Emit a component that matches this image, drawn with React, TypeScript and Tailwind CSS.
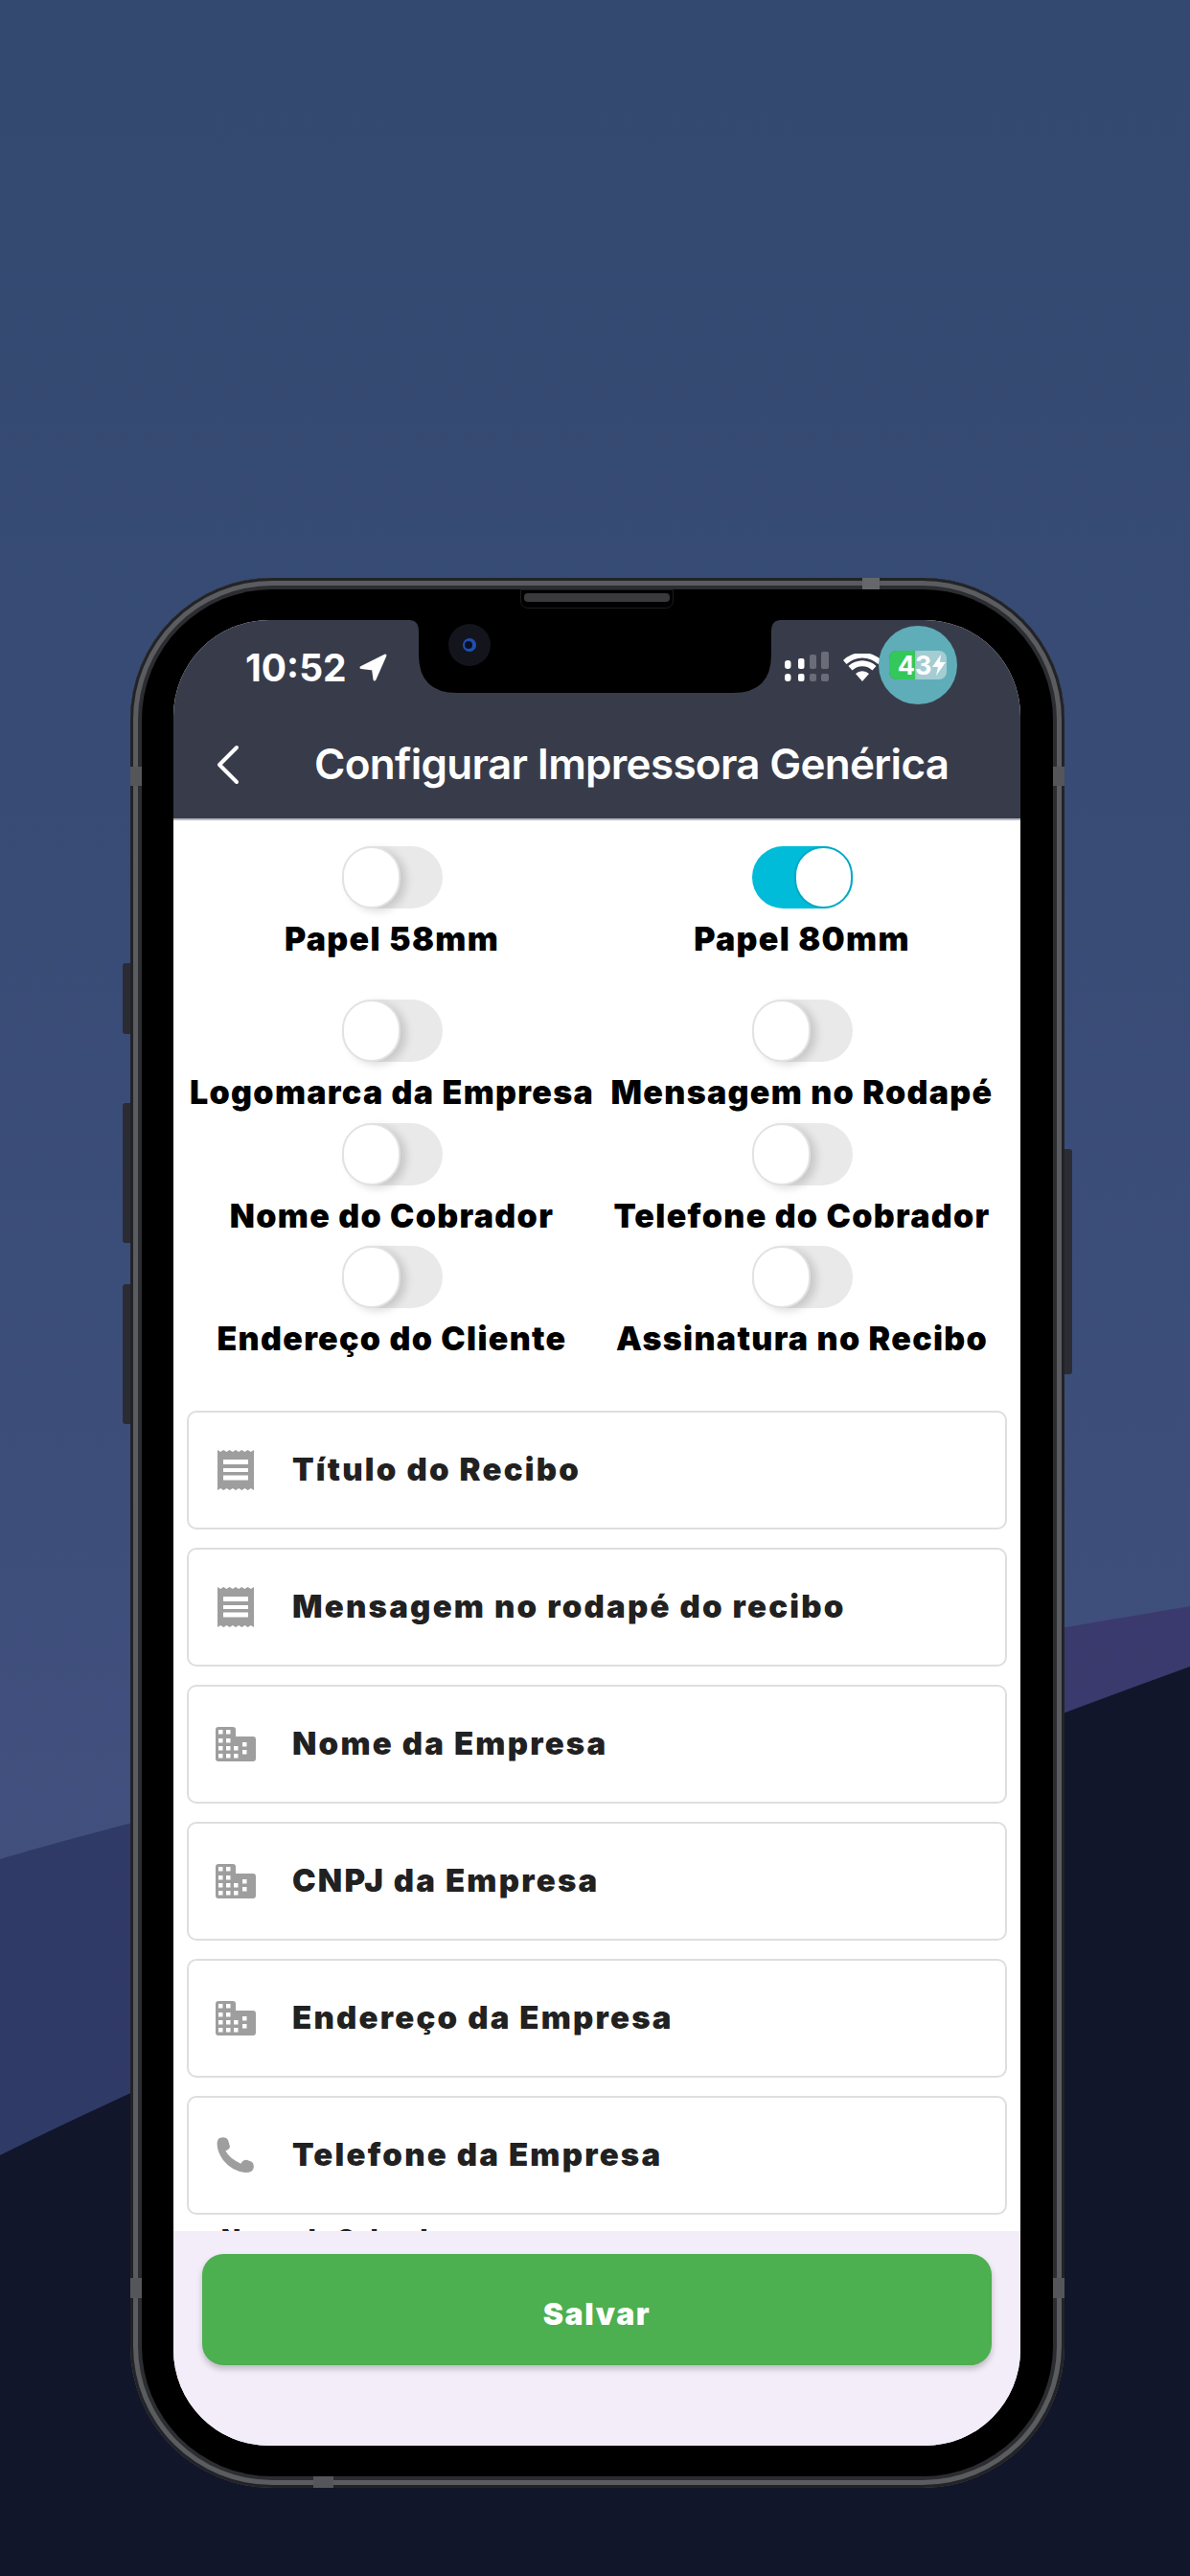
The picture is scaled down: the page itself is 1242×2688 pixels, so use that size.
const toggles = [
  [
    { label: "Papel 58mm", on: false },
    { label: "Papel 80mm", on: true },
  ],
  [
    { label: "Logomarca da Empresa", on: false },
    { label: "Mensagem no Rodapé", on: false },
  ],
  [
    { label: "Nome do Cobrador", on: false },
    { label: "Telefone do Cobrador", on: false },
  ],
  [
    { label: "Endereço do Cliente", on: false },
    { label: "Assinatura no Recibo", on: false },
  ],
];

const fields = [
  { label: "Título do Recibo", icon: "receipt" },
  { label: "Mensagem no rodapé do recibo", icon: "receipt" },
  { label: "Nome da Empresa", icon: "building" },
  { label: "CNPJ da Empresa", icon: "building" },
  { label: "Endereço da Empresa", icon: "building" },
  { label: "Telefone da Empresa", icon: "phone" },
];

// janelas do ícone de prédio [x, y]
const windows = [
  [3, 3], [11, 3],
  [3, 12], [11, 12],
  [3, 20], [11, 20], [19, 20],
  [3, 28], [11, 28], [19, 28],
  [28, 16], [28, 24],
];

function ReceiptIcon() {
  return (
    <svg width="38" height="42" viewBox="0 0 38 42">
      <path
        fill="#9e9e9e"
        d="M0 0l3.200 2 3.100-2 3.200 2 3.100-2 3.200 2 3.200-2 3.100 2 3.200-2 3.100 2 3.200-2 3.200 2L38 0v42l-3.200-2-3.100 2-3.200-2-3.100 2-3.200-2-3.200 2-3.100-2-3.200 2-3.100-2-3.200 2-3.200-2L0 42z"
      />
      <rect x="6" y="10" width="26" height="5" fill="#fff" />
      <rect x="6" y="19" width="26" height="4" fill="#fff" />
      <rect x="6" y="26.500" width="26" height="5" fill="#fff" />
    </svg>
  );
}

function BuildingIcon() {
  return (
    <svg width="42" height="36" viewBox="0 0 42 36">
      <path
        fill="#9e9e9e"
        d="M3 0h15a3 3 0 0 1 3 3v7h18a3 3 0 0 1 3 3v20a3 3 0 0 1-3 3H3a3 3 0 0 1-3-3V3a3 3 0 0 1 3-3z"
      />
      {windows.map(([x, y]) => (
        <rect key={`${x}-${y}`} x={x} y={y} width="4.500" height="4.500" fill="#fff" />
      ))}
    </svg>
  );
}

function PhoneIcon() {
  return (
    <svg width="60" height="60" viewBox="0 0 180 180">
      <path
        fill="#9e9e9e"
        d="M40 36Q60 30 66 42L72 62Q72 70 58 76Q70 100 106 116Q112 104 124 104L140 110Q148 114 146 130Q144 144 122 144Q78 140 50 104Q30 76 32 50Q34 38 40 36z"
      />
    </svg>
  );
}

function Toggle({ on }: { on: boolean }) {
  return (
    <div
      className={`flex h-[65px] w-[105px] rounded-full ${
        on ? "justify-end bg-[#00bcd9]" : "justify-start bg-[#e9e9e9]"
      }`}
    >
      <div
        className={`h-[65px] w-[61px] rounded-full border-2 bg-white ${
          on ? "border-[#00a9c4]" : "border-[#e2e2e2] shadow-[6px_3px_8px_rgba(0,0,0,0.14)]"
        }`}
      />
    </div>
  );
}

export default function App() {
  return (
    <div className="relative h-[2688px] w-[1242px] overflow-hidden bg-gradient-to-b from-[#33496f] via-[#3b4d79] to-[#4a5384] pl-[136px] pt-[603px] font-['Inter',sans-serif]">
      {/* ondas do fundo */}
      <svg className="absolute left-0 top-0" width="1242" height="2688" viewBox="0 0 1242 2688">
        <defs>
          <linearGradient id="band" x1="0" y1="0" x2="1" y2="0">
            <stop offset="0" stopColor="#2f3a66" />
            <stop offset="1" stopColor="#3b3a6e" />
          </linearGradient>
        </defs>
        <path fill="url(#band)" d="M0 1940C120 1905 500 1800 1242 1676V2688H0z" />
        <path fill="#12162b" d="M0 2249C300 2100 800 1900 1242 1739V2688H0z" />
      </svg>

      {/* botões laterais */}
      <div className="absolute left-[128px] top-[1005px] h-[74px] w-[8px] rounded-l-[3px] bg-[#2b2c33]" />
      <div className="absolute left-[128px] top-[1151px] h-[146px] w-[8px] rounded-l-[3px] bg-[#2b2c33]" />
      <div className="absolute left-[128px] top-[1340px] h-[146px] w-[8px] rounded-l-[3px] bg-[#2b2c33]" />
      <div className="absolute left-[1111px] top-[1199px] h-[235px] w-[8px] rounded-r-[3px] bg-[#2b2c33]" />

      <div className="relative h-[1993px] w-[975px] rounded-[148px] bg-black pl-[45px] pt-[44px] shadow-[inset_0_0_0_3px_#222327,inset_0_0_0_8px_#5b5c60,inset_0_0_0_12px_#2c2d30]">
        {/* antenas e alto-falante */}
        <div className="absolute left-[764px] top-0 h-[12px] w-[18px] bg-[#66676b]" />
        <div className="absolute left-[191px] bottom-0 h-[12px] w-[21px] bg-[#55565a]" />
        <div className="absolute left-0 top-[197px] h-[20px] w-[12px] bg-[#55565a]" />
        <div className="absolute right-0 top-[197px] h-[20px] w-[12px] bg-[#55565a]" />
        <div className="absolute left-0 top-[1774px] h-[21px] w-[12px] bg-[#55565a]" />
        <div className="absolute right-0 top-[1774px] h-[21px] w-[12px] bg-[#55565a]" />
        <div className="absolute left-[407px] top-[12px] h-[20px] w-[160px] rounded-b-[8px] border border-[#1c1c1f] bg-black p-[3px]">
          <div className="h-[9px] rounded-[4px] bg-[#3a3a3d]" />
        </div>

        <div className="relative flex h-[1905px] w-[884px] flex-col overflow-hidden rounded-[100px] bg-white">
          {/* cabeçalho */}
          <div className="flex h-[209px] flex-col border-b-2 border-[#b9bbc2] bg-[#383c4a] text-white">
            <div className="flex h-[96px] items-center pl-[75px] pt-[2px]">
              <span className="text-[39px] font-bold leading-none">10:52</span>
              <svg className="ml-[12px]" width="31" height="31" viewBox="0 0 31 31">
                <path
                  fill="#fff"
                  stroke="#fff"
                  strokeWidth="3"
                  strokeLinejoin="round"
                  d="M28 3L3 15.500L15.500 17L17 28z"
                />
              </svg>
              <svg className="ml-[414px]" width="46" height="32" viewBox="0 0 46 32">
                <g fill="#fff">
                  <rect x="0" y="9" width="6.500" height="9" rx="3" />
                  <rect x="0" y="23" width="6.500" height="8" rx="3" />
                  <rect x="14" y="7" width="6.500" height="11" rx="2" />
                  <rect x="14" y="23" width="6.500" height="8" rx="2" />
                </g>
                <g fill="#6a6d78">
                  <rect x="26" y="3" width="7" height="15" rx="2" />
                  <rect x="26" y="23" width="7" height="8" rx="2" />
                  <rect x="38" y="0" width="8" height="18" rx="2" />
                  <rect x="38" y="23" width="8" height="8" rx="2" />
                </g>
              </svg>
              <svg className="ml-[15px]" width="40" height="29" viewBox="0 0 40 29">
                <path
                  fill="#fff"
                  d="M20 29l-7-8a10 10 0 0 1 14 0zM9.500 17.500L5.500 13a21 21 0 0 1 29 0l-4 4.500a15 15 0 0 0-21 0zM3.500 11L0 7a29 29 0 0 1 40 0l-3.500 4a24 24 0 0 0-33 0z"
                />
              </svg>
            </div>
            <div className="flex flex-1 items-start pl-[44px] pt-[26px]">
              <svg width="26" height="42" viewBox="0 0 26 42" className="mt-[8px]">
                <path
                  fill="none"
                  stroke="#fff"
                  strokeWidth="4"
                  strokeLinecap="round"
                  strokeLinejoin="round"
                  d="M22 3L4 21l18 18"
                />
              </svg>
              <span className="ml-[77px] text-[44px] font-semibold leading-[56px] tracking-[-0.7px]">
                Configurar Impressora Genérica
              </span>
            </div>
          </div>

          {/* notch */}
          <svg className="absolute left-[246px] top-0" width="388" height="76" viewBox="0 0 388 76">
            <path fill="#000" d="M0 0H388Q378 0 378 12V36Q378 76 338 76H50Q10 76 10 36V12Q10 0 0 0z" />
            <circle cx="63" cy="26" r="22" fill="#14151c" />
            <circle cx="63" cy="26" r="7" fill="#1f4fb0" />
            <circle cx="62" cy="26" r="4" fill="#0a0f24" />
          </svg>

          {/* bateria sobre círculo */}
          <div className="absolute left-[736px] top-[6px] flex h-[82px] w-[82px] items-center justify-center rounded-full bg-[#5fadb8]">
            <div className="flex h-[30px] w-[60px] items-center rounded-[8px] bg-gradient-to-r from-[#4b6268] via-[#a4cdd3] to-[#a4cdd3]">
              <div className="flex h-[30px] w-[27px] items-center justify-end rounded-l-[8px] bg-[#34c759] text-[27px] font-bold leading-none text-white">
                4
              </div>
              <div className="text-[27px] font-bold leading-none text-white">3</div>
              <svg className="ml-[1px]" width="14" height="22" viewBox="0 0 14 22">
                <path fill="#fff" d="M9 0L0 13h6l-2 9 10-14H8z" />
              </svg>
            </div>
          </div>

          {/* conteúdo */}
          <div className="flex-1 overflow-hidden px-[14px]">
            <div className="grid grid-cols-2 pt-[27px]">
              {toggles.map((row, i) =>
                row.map((t) => (
                  <div
                    key={t.label}
                    className={`flex flex-col items-center ${i === 0 ? "h-[160px]" : "h-[128.500px]"}`}
                  >
                    <Toggle on={t.on} />
                    <span className="mt-[11px] whitespace-nowrap text-[34px] font-black leading-[42px] tracking-[1.3px] text-black">
                      {t.label}
                    </span>
                  </div>
                )),
              )}
            </div>
            <div className="mt-[43px] flex flex-col gap-[19px]">
              {fields.map((f) => (
                <div
                  key={f.label}
                  className="flex h-[124px] items-center rounded-[10px] border-2 border-[#dedede] bg-white"
                >
                  <div className="flex w-[98px] justify-center">
                    {f.icon === "receipt" && <ReceiptIcon />}
                    {f.icon === "building" && <BuildingIcon />}
                    {f.icon === "phone" && <PhoneIcon />}
                  </div>
                  <span className="ml-[10px] text-[33px] font-black tracking-[2.2px] text-[#212121]">{f.label}</span>
                </div>
              ))}
              <span className="-mt-[9px] pl-[36px] text-[26px] font-black leading-[30px] text-[#212121]">
                Nome do Cobrador
              </span>
            </div>
          </div>

          {/* rodapé */}
          <div className="h-[224px] bg-[#f2edf8] px-[30px] pt-[24px]">
            <button className="flex h-[116px] w-full items-center justify-center rounded-[22px] bg-[#4caf50] pt-[10px] text-[32px] font-black tracking-[1.6px] text-white shadow-[0_4px_6px_rgba(0,0,0,0.22)]">
              Salvar
            </button>
          </div>
        </div>
      </div>
    </div>
  );
}
